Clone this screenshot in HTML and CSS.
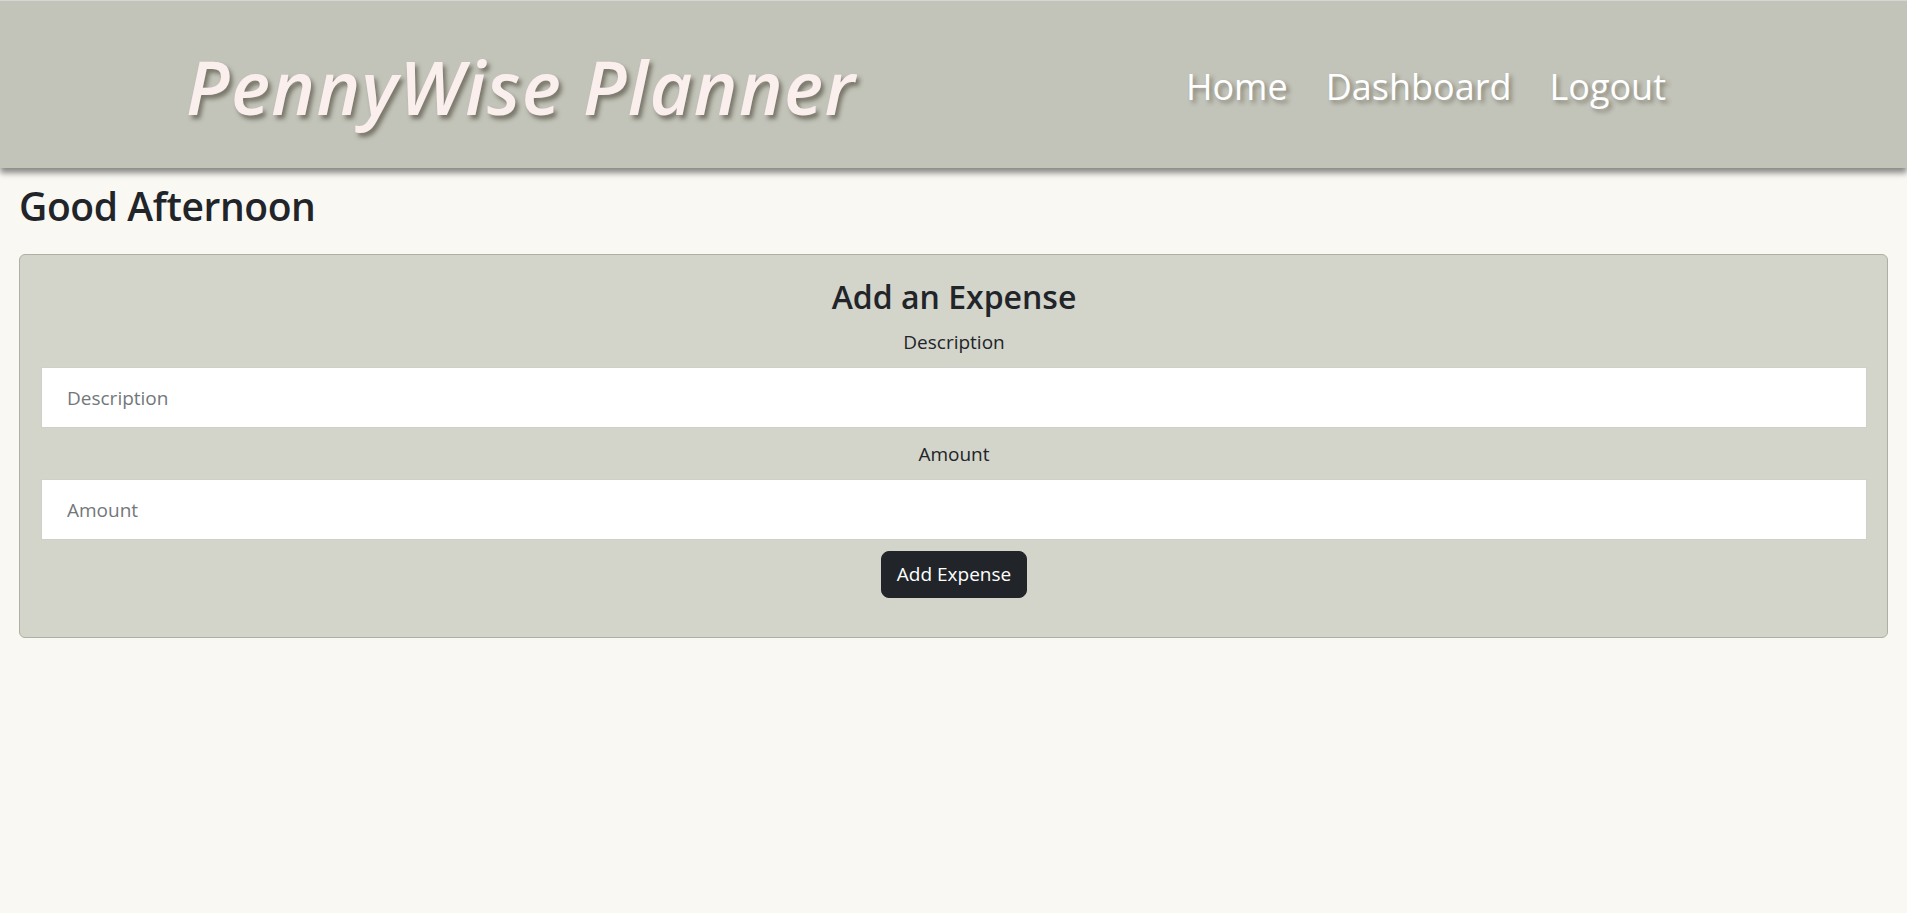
FILE: index.html
```html
<!DOCTYPE html>
<html lang="en">
<head>
<meta charset="utf-8">
<title>PennyWise Planner</title>
<link rel="stylesheet" href="styles.css">
</head>
<body>
<header class="site-header">
  <div class="brand">PennyWise Planner</div>
  <nav class="main-nav">
    <a href="#" class="nav-link">Home</a>
    <a href="#" class="nav-link">Dashboard</a>
    <a href="#" class="nav-link">Logout</a>
  </nav>
</header>
<main class="content">
  <h1 class="greeting">Good Afternoon</h1>
  <section class="expense-card">
    <h2 class="card-title">Add an Expense</h2>
    <form class="expense-form">
      <div class="field">
        <label class="field-label" for="desc">Description</label>
        <input class="field-input" id="desc" type="text" placeholder="Description">
      </div>
      <div class="field">
        <label class="field-label" for="amt">Amount</label>
        <input class="field-input" id="amt" type="text" placeholder="Amount">
      </div>
      <div class="actions">
        <button type="button" class="btn-dark">Add Expense</button>
      </div>
    </form>
  </section>
</main>
</body>
</html>
```
FILE: styles.css
```css
* { box-sizing: border-box; }
html, body { margin: 0; padding: 0; }
body {
  background: #f9f8f3;
  font-family: "Open Sans", "Noto Sans", sans-serif;
  color: #212529;
}
.site-header {
  height: 168px;
  border-top: 1px solid #d6d6d2;
  background: #c2c3b9;
  box-shadow: 0 5px 6px rgba(0, 0, 0, 0.45);
  display: flex;
  align-items: center;
  justify-content: space-between;
  padding: 0 241px 0 186px;
  position: relative;
}
.brand {
  font-size: 74px;
  font-style: italic;
  font-weight: 600;
  color: #fbefee;
  text-shadow: 3px 4px 4px rgba(60, 55, 40, 0.55);
  letter-spacing: 1.4px;
  line-height: 1;
  margin-top: 4px;
}
.main-nav {
  display: flex;
  gap: 38px;
  margin-top: 4px;
}
.nav-link {
  font-size: 36px;
  color: #ffffff;
  text-decoration: none;
  text-shadow: 3px 3px 4px rgba(60, 55, 40, 0.45);
  line-height: 1;
}
.content {
  padding: 0 19px;
}
.greeting {
  font-size: 39px;
  font-weight: 600;
  letter-spacing: -0.4px;
  line-height: 48px;
  margin: 14px 0 24px 0;
}
.expense-card {
  background: #d3d4ca;
  border: 1px solid #aeafa5;
  border-radius: 6px;
  padding: 23px 20px 39px 21px;
}
.card-title {
  margin: 0 0 11px;
  text-align: center;
  font-size: 32px;
  font-weight: 600;
  line-height: 38px;
}
.expense-form {
  display: flex;
  flex-direction: column;
  gap: 11px;
}
.field {
  display: flex;
  flex-direction: column;
  gap: 10px;
}
.field-label {
  text-align: center;
  font-size: 19px;
  line-height: 30px;
}
.field-input {
  height: 61px;
  width: 100%;
  border: 1px solid #cfd0ca;
  border-radius: 0;
  background: #ffffff;
  padding: 0 25px;
  font-family: inherit;
  font-size: 19px;
  color: #212529;
}
.field-input::placeholder {
  color: #73777b;
}
.actions {
  display: flex;
  justify-content: center;
}
.btn-dark {
  background: #212529;
  color: #ffffff;
  border: 1px solid #212529;
  border-radius: 8px;
  font-family: inherit;
  font-size: 19px;
  line-height: 29px;
  padding: 8px 15px;
  height: 47px;
}
```
